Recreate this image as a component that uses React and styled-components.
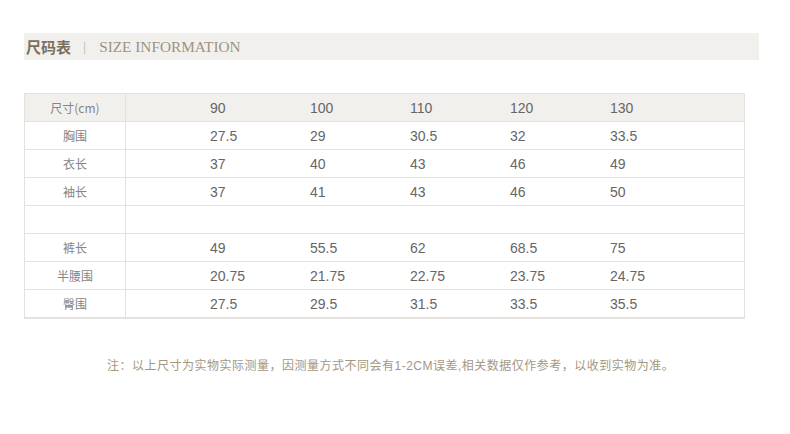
import React from 'react'
import styled, { createGlobalStyle } from 'styled-components'

const GlobalStyle = createGlobalStyle`
  html, body { margin: 0; padding: 0; background: #fff; }
  body { font-family: "Liberation Sans", Arial, "Noto Sans CJK SC", sans-serif; }
`

const sizes = ['90', '100', '110', '120', '130']

const rows = [
  { label: '胸围', values: ['27.5', '29', '30.5', '32', '33.5'] },
  { label: '衣长', values: ['37', '40', '43', '46', '49'] },
  { label: '袖长', values: ['37', '41', '43', '46', '50'] },
  { label: '', values: [] },
  { label: '裤长', values: ['49', '55.5', '62', '68.5', '75'] },
  { label: '半腰围', values: ['20.75', '21.75', '22.75', '23.75', '24.75'] },
  { label: '臀围', values: ['27.5', '29.5', '31.5', '33.5', '35.5'] },
]

function App() {
  return (
    <Page>
      <GlobalStyle />
      <TitleBar>
        <TitleCn>尺码表</TitleCn>
        <Divider>|</Divider>
        <TitleEn>SIZE INFORMATION</TitleEn>
      </TitleBar>
      <Table>
        <Row head>
          <Label>尺寸(cm)</Label>
          <Values>
            {sizes.map(s => <Value key={s}>{s}</Value>)}
          </Values>
        </Row>
        {rows.map((r, i) => (
          <Row key={i} last={i === rows.length - 1}>
            <Label>{r.label}</Label>
            <Values>
              {r.values.map((v, j) => <Value key={j}>{v}</Value>)}
            </Values>
          </Row>
        ))}
      </Table>
      <Note>注：以上尺寸为实物实际测量，因测量方式不同会有1-2CM误差,相关数据仅作参考，以收到实物为准。</Note>
    </Page>
  )
}

export default App

const Page = styled.div`
  width: 790px;
  height: 434px;
  padding: 33px 0 0 24px;
  box-sizing: border-box;
`

const TitleBar = styled.header`
  width: 735px;
  height: 27px;
  background: #f2f0ed;
  display: flex;
  align-items: center;
  padding-left: 2px;
  box-sizing: border-box;
`

const TitleCn = styled.h2`
  margin: 0;
  font-size: 15px;
  font-weight: bold;
  color: #7a705f;
  font-family: "Noto Sans CJK SC", sans-serif;
`

const Divider = styled.span`
  margin: 0 13px 0 12px;
  font-size: 12px;
  color: #c8c2b8;
`

const TitleEn = styled.span`
  font-family: "Liberation Serif", "Times New Roman", serif;
  font-size: 15.3px;
  color: #9d937f;
`

const Table = styled.div`
  margin-top: 33px;
  width: 721px;
  border: 1px solid #e5e2dd;
  border-bottom: none;
  box-sizing: border-box;
`

const Row = styled.div`
  display: grid;
  grid-template-columns: 101px 1fr;
  height: ${p => (p.last ? '29px' : '28px')};
  background: ${p => (p.head ? '#f2f0ed' : '#fff')};
  border-bottom: ${p => (p.last ? '2px' : '1px')} solid #e5e2dd;
  box-sizing: border-box;
`

const Label = styled.div`
  display: flex;
  align-items: center;
  justify-content: center;
  border-right: 1px solid #e5e2dd;
  font-size: 12px;
  color: #858585;
  font-family: "Noto Sans CJK SC", sans-serif;
`

const Values = styled.div`
  display: grid;
  grid-template-columns: repeat(5, 100px);
  padding-left: 84px;
  align-items: center;
`

const Value = styled.span`
  font-size: 14px;
  color: #666;
`

const Note = styled.p`
  margin: 37px 0 0 83px;
  font-size: 12px;
  letter-spacing: 0.5px;
  color: #a4977f;
  font-family: "Liberation Sans", "Noto Sans CJK SC", sans-serif;
  white-space: nowrap;
`
